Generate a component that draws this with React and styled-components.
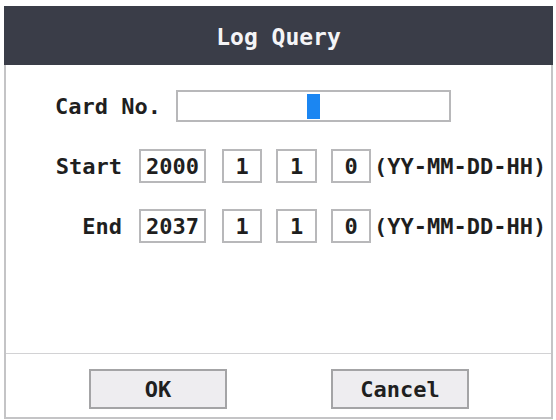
import React from 'react'
import styled, { createGlobalStyle } from 'styled-components'

const GlobalStyle = createGlobalStyle`
  html, body {
    margin: 0;
    padding: 0;
    background: #ffffff;
  }
  body {
    font-family: "DejaVu Sans Mono", "Liberation Mono", monospace;
    color: #1f1f1f;
  }
`

const Dialog = styled.div`
  box-sizing: border-box;
  margin: 6px 0 0 4px;
  width: 549px;
  height: 413px;
  border: 2px solid #c4c4c6;
  border-top: none;
  display: flex;
  flex-direction: column;
  background: #fff;
`

const Header = styled.div`
  height: 59px;
  margin: 0 -2px;
  background: #3a3d48;
  display: flex;
  align-items: center;
  justify-content: center;
  color: #f4f4f6;
  font-size: 23px;
  font-weight: bold;
  padding-top: 3px;
  box-sizing: border-box;
`

const Body = styled.div`
  flex: 1;
  padding: 25px 0 0 49px;
  display: flex;
  flex-direction: column;
`

const Row = styled.div`
  display: flex;
  align-items: center;
  margin-bottom: ${p => p.$gap || 0}px;
`

const Label = styled.span`
  font-size: 22px;
  font-weight: bold;
  width: ${p => p.$width}px;
  text-align: ${p => p.$align || 'left'};
  white-space: pre;
`

const TextInput = styled.div`
  box-sizing: border-box;
  width: 275px;
  height: 32px;
  margin-left: 15px;
  border: 2px solid #b8b8ba;
  position: relative;
`

const Caret = styled.span`
  position: absolute;
  left: 129px;
  top: 2px;
  width: 13px;
  height: 25px;
  background: #1b86f2;
`

const Field = styled.div`
  box-sizing: border-box;
  width: ${p => p.$width}px;
  height: 34px;
  margin-left: ${p => p.$ml}px;
  border: 2px solid #b8b8ba;
  display: flex;
  align-items: center;
  justify-content: center;
  font-size: 22px;
  font-weight: bold;
`

const Hint = styled.span`
  margin-left: 3px;
  font-size: 22px;
  font-weight: bold;
  white-space: pre;
`

const Footer = styled.div`
  height: 64px;
  border-top: 1px solid #d2d2d4;
  display: flex;
  align-items: flex-start;
  padding: 15px 0 0 83px;
  box-sizing: border-box;
  gap: 104px;
`

const Button = styled.button`
  box-sizing: border-box;
  width: 138px;
  height: 40px;
  background: #eeedf0;
  border: 2px solid #a4a4a6;
  font-family: "DejaVu Sans Mono", monospace;
  font-size: 22px;
  font-weight: bold;
  color: #1f1f1f;
  padding: 0;
`

const DateRow = ({ label, year, gap }) => (
  <Row $gap={gap}>
    <Label $width={67} $align="right">{label}</Label>
    <Field $width={67} $ml={17}>{year}</Field>
    <Field $width={40} $ml={16}>1</Field>
    <Field $width={41} $ml={14}>1</Field>
    <Field $width={40} $ml={14}>0</Field>
    <Hint>(YY-MM-DD-HH)</Hint>
  </Row>
)

export default function App() {
  return (
    <>
      <GlobalStyle />
      <Dialog>
        <Header>Log Query</Header>
        <Body>
          <Row $gap={27}>
            <Label $width={106}>Card No.</Label>
            <TextInput>
              <Caret />
            </TextInput>
          </Row>
          <DateRow label="Start" year="2000" gap={26} />
          <DateRow label="End" year="2037" />
        </Body>
        <Footer>
          <Button>OK</Button>
          <Button>Cancel</Button>
        </Footer>
      </Dialog>
    </>
  )
}
